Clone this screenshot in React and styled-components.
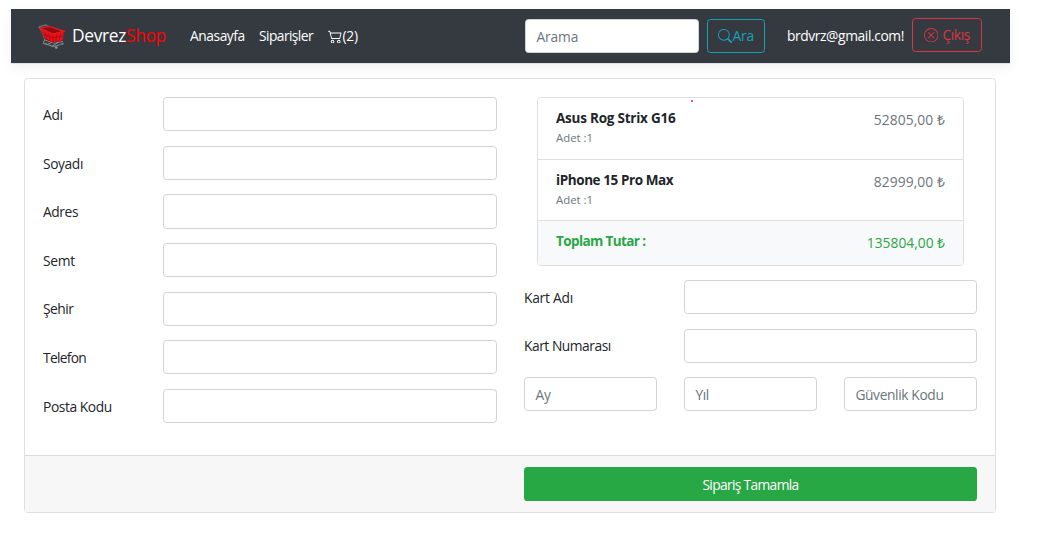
import React from "react";
import styled, { createGlobalStyle, css } from "styled-components";
import { BsCart2, BsSearch, BsXCircle } from "react-icons/bs";

const GlobalStyle = createGlobalStyle`
  *, *::before, *::after { box-sizing: border-box; }
  body {
    margin: 0;
    background: #fff;
    color: #212529;
    font-family: "Open Sans", "Noto Sans", sans-serif;
    font-size: 13.8px;
    line-height: 21.6px;
    overflow: hidden;
  }
`;

const Page = styled.div`
  width: 1043px;
  height: 542px;
  padding: 9px 33px 0 11px;
`;

const Navbar = styled.nav`
  display: flex;
  align-items: center;
  height: 55px;
  padding: 0 28px 0 27px;
  background: #343a40;
  border-bottom: 1px solid #dee2e6;
  box-shadow: 0 4px 12px rgba(0, 0, 0, 0.055);
  color: #fff;
`;

const Text = styled.span`
  white-space: nowrap;
  letter-spacing: ${(p) => p.$track || 0}px;
`;

const Brand = styled.a`
  display: flex;
  align-items: center;
  width: 152px;
  gap: 7px;
  font-size: 17.4px;
  line-height: 27px;
  padding-bottom: 2px;

  svg { margin-top: 3px; }
`;

const BrandAccent = styled.span`
  color: #f00;
`;

const NavLinks = styled.div`
  display: flex;
  align-items: center;
  width: 335px;
  gap: 14px;
`;

const NavLink = styled.a`
  display: flex;
  align-items: center;
  width: ${(p) => p.$width}px;
`;

const SearchForm = styled.form`
  display: flex;
  gap: 8px;
  width: 262px;
`;

const Input = styled.input`
  display: block;
  width: 100%;
  min-width: 0;
  height: 34.2px;
  padding: 1px 10.8px 0 10.4px;
  border: 1px solid #ced4da;
  border-radius: 3.6px;
  background: #fff;
  color: #495057;
  font: inherit;
  letter-spacing: ${(p) => p.$track || 0}px;
  outline: none;

  &::placeholder { color: #6c757d; opacity: 1; }
`;

const SearchInput = styled(Input)`
  width: 174px;
  padding-top: 0;
`;

const tones = { info: "#17a2b8", danger: "#dc3545" };

const OutlineButton = styled.button`
  display: flex;
  flex: none;
  align-items: center;
  justify-content: center;
  gap: ${(p) => p.$gap || 0}px;
  width: ${(p) => p.$width}px;
  height: 34px;
  padding: 0;
  border: 1px solid ${(p) => tones[p.$tone]};
  border-radius: 3.6px;
  background: transparent;
  color: ${(p) => tones[p.$tone]};
  font: inherit;
  ${(p) => p.$raised && css`margin-bottom: 2px;`}
`;

const Account = styled.div`
  display: flex;
  align-items: center;
  justify-content: space-between;
  width: 195px;
`;

const Card = styled.main`
  margin: 14px 14px 0 13px;
  height: 435px;
  display: flex;
  flex-direction: column;
  border: 1px solid #dfdfdf;
  border-radius: 3.6px;
`;

const CardBody = styled.div`
  flex: 1;
  display: grid;
  grid-template-columns: 454px 453px;
  column-gap: 27px;
  padding: 18px;
`;

const CardFooter = styled.footer`
  display: flex;
  justify-content: flex-end;
  height: 57.4px;
  padding: 11px 18px;
  border-top: 1px solid #d9dadb;
  background: #f7f7f7;
`;

const SubmitButton = styled.button`
  width: 453px;
  height: 34px;
  padding: 2px 0 0;
  border: 0;
  border-radius: 3.6px;
  background: #28a745;
  color: #fff;
  font: inherit;
`;

const Fields = styled.div`
  display: flex;
  flex-direction: column;
  gap: 14.4px;
  padding-top: ${(p) => p.$offset || 0}px;
`;

const Field = styled.label`
  display: grid;
  grid-template-columns: ${(p) => p.$label}px 1fr;
  align-items: center;

  ${Text} { padding-top: 1px; }
`;

const SplitFields = styled.div`
  display: grid;
  grid-template-columns: repeat(3, 133px);
  justify-content: space-between;
`;

const SummaryList = styled.ul`
  position: relative;
  width: 427px;
  height: 169px;
  margin: 0 0 14px 13px;
  padding: 0;
  list-style: none;
  border: 1px solid #dfdfdf;
  border-radius: 3.6px;
  overflow: hidden;
`;

const RedDot = styled.i`
  position: absolute;
  top: 2px;
  left: 153px;
  width: 2px;
  height: 2px;
  background: #ef5b62;
`;

const SummaryItem = styled.li`
  display: flex;
  justify-content: space-between;
  height: ${(p) => (p.$total ? 47 : 61)}px;
  padding: 10px 18px 0;
  background: ${(p) => (p.$total ? "#f8f9fa" : "#fff")};
  color: ${(p) => (p.$total ? "#28a745" : "#212529")};

  & + & { border-top: 1px solid #dfdfdf; }
`;

const ProductName = styled.h6`
  margin: 0;
  font-size: 13.5px;
  font-weight: 700;
  line-height: 21px;
  letter-spacing: ${(p) => p.$track || 0}px;
`;

const Quantity = styled.small`
  display: block;
  color: #6c757d;
  font-size: 11.4px;
  line-height: 18px;
`;

const Price = styled.span`
  padding-top: 1px;
  color: ${(p) => (p.$total ? "inherit" : "#6c757d")};
  letter-spacing: ${(p) => p.$track || 0}px;
`;

function BrandCart() {
  return (
    <svg width="27" height="27" viewBox="0 0 28 27" fill="none">
      <path d="M1 3.5 8 1.5l5 3" stroke="#6d7276" strokeWidth="1.2" />
      <path d="M1 3.5 4 8l3 8.5-1.5 4 11 3.5 9-3" stroke="#777c80" strokeWidth="1.3" />
      <path d="m7 17 10 3.5 9-2M9 22l9-4M14 24l8-5" stroke="#8b9093" />
      <path d="m2.5 5 9-2L27 8l-1.5 10-10 2L7 16z" fill="#8c0d14" />
      <path d="m3 5.5 12 5L27 8l-1.5 9.5-10 2L7 15z" fill="#e80f16" />
      <path d="m2.5 5 9-2L27 8l-11.5 3z" stroke="#e5181f" strokeWidth="1.5" />
      <path d="m7 9 2 6m2-4.5 1.5 6M15.5 12v7m4-8-1 7m5-8-1.5 7M5 11l10.5 4 10.5-2" stroke="#a50b12" strokeWidth=".8" />
      <circle cx="8" cy="21" r="1.3" fill="#6c7175" />
      <circle cx="19" cy="25" r="1.4" fill="#8b9093" />
      <circle cx="25.5" cy="21" r="1.2" fill="#777c80" />
    </svg>
  );
}

const addressFields = [
  { label: "Adı", track: -0.3 },
  { label: "Soyadı", track: -0.4 },
  { label: "Adres", track: -0.4 },
  { label: "Semt", track: -0.3 },
  { label: "Şehir", track: -0.5 },
  { label: "Telefon", track: -0.7 },
  { label: "Posta Kodu", track: -0.42 },
];
const cardFields = [
  { label: "Kart Adı", track: -0.25 },
  { label: "Kart Numarası", track: -0.47 },
];
const products = [
  { name: "Asus Rog Strix G16", price: "52805,00 ₺", track: -0.23 },
  { name: "iPhone 15 Pro Max", price: "82999,00 ₺", track: -0.42 },
];

export default function App() {
  return (
    <Page>
      <GlobalStyle />
      <Navbar>
        <Brand>
          <BrandCart />
          <Text $track={-0.35}>Devrez<BrandAccent>Shop</BrandAccent></Text>
        </Brand>
        <NavLinks>
          <NavLink $width={55}><Text $track={-0.45}>Anasayfa</Text></NavLink>
          <NavLink $width={55}><Text $track={-0.57}>Siparişler</Text></NavLink>
          <NavLink><BsCart2 size={14.4} /><Text $track={-0.2}>(2)</Text></NavLink>
        </NavLinks>
        <SearchForm>
          <SearchInput placeholder="Arama" $track={-0.1} />
          <OutlineButton type="button" $tone="info" $width={58}>
            <BsSearch size={14.4} /><Text $track={-0.2}>Ara</Text>
          </OutlineButton>
        </SearchForm>
        <Account>
          <Text $track={-0.4}>brdvrz@gmail.com!</Text>
          <OutlineButton type="button" $tone="danger" $width={70} $gap={4} $raised>
            <BsXCircle size={14.4} /><Text $track={-0.4}>Çıkış</Text>
          </OutlineButton>
        </Account>
      </Navbar>
      <Card>
        <CardBody>
          <Fields $offset={0.3}>
            {addressFields.map(({ label, track }) => (
              <Field key={label} $label={120}>
                <Text $track={track}>{label}</Text>
                <Input />
              </Field>
            ))}
          </Fields>
          <div>
            <SummaryList>
              {products.map((product) => (
                <SummaryItem key={product.name}>
                  <div>
                    <ProductName $track={product.track}>{product.name}</ProductName>
                    <Quantity>Adet :1</Quantity>
                  </div>
                  <Price $track={0.1}>{product.price}</Price>
                </SummaryItem>
              ))}
              <SummaryItem $total>
                <ProductName $track={-0.6}>Toplam Tutar :</ProductName>
                <Price $total>135804,00 ₺</Price>
              </SummaryItem>
              <RedDot />
            </SummaryList>
            <Fields>
              {cardFields.map(({ label, track }) => (
                <Field key={label} $label={160}>
                  <Text $track={track}>{label}</Text>
                  <Input />
                </Field>
              ))}
              <SplitFields>
                <Input placeholder="Ay" />
                <Input placeholder="Yıl" $track={-0.4} />
                <Input placeholder="Güvenlik Kodu" $track={-0.38} />
              </SplitFields>
            </Fields>
          </div>
        </CardBody>
        <CardFooter>
          <SubmitButton type="button"><Text $track={-0.66}>Sipariş Tamamla</Text></SubmitButton>
        </CardFooter>
      </Card>
    </Page>
  );
}
